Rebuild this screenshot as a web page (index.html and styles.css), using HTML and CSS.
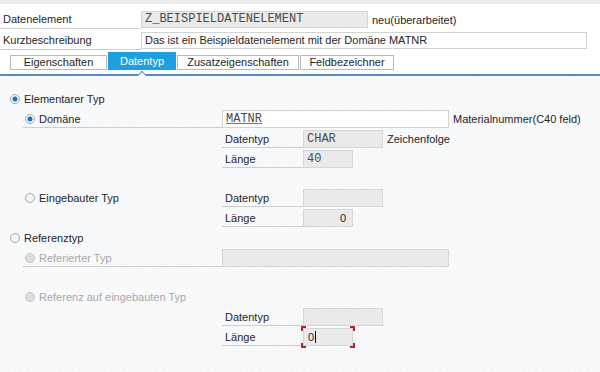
FILE: index.html
```html
<!DOCTYPE html>
<html lang="de">
<head>
    <meta charset="UTF-8">
    <meta name="viewport" content="width=device-width, initial-scale=1.0">
    <title>Datenelement pflegen</title>
    <link rel="stylesheet" href="styles.css">
</head>
<body>
    <div class="top-strip"></div>

    <header class="head">
        <div class="head-row">
            <div class="head-label">Datenelement</div>
            <div class="field field-ro mono w-name">Z_BEISPIELDATENELEMENT</div>
            <span class="note">neu(überarbeitet)</span>
        </div>
        <div class="head-row">
            <div class="head-label">Kurzbeschreibung</div>
            <div class="field w-desc">Das ist ein Beispieldatenelement mit der Domäne MATNR</div>
        </div>
        <!-- Registerkarten -->
        <nav class="tabs">
            <div class="tab w-t1">Eigenschaften</div>
            <div class="tab tab-active w-t2">Datentyp</div>
            <div class="tab w-t3">Zusatzeigenschaften</div>
            <div class="tab w-t4">Feldbezeichner</div>
        </nav>
    </header>
    <div class="tab-line"></div>

    <main class="panel">
        <!-- Elementarer Typ -->
        <div class="row">
            <div class="opt lvl1"><span class="radio on"></span>Elementarer Typ</div>
        </div>
        <div class="row">
            <div class="opt lvl2 lined"><span class="radio on"></span>Domäne</div>
            <div class="field mono w-wide"><span class="link">MATNR</span></div>
            <span class="note">Materialnummer(C40 feld)</span>
        </div>
        <div class="row">
            <div class="opt"></div>
            <div class="lbl">Datentyp</div>
            <div class="field field-ro mono w-type">CHAR</div>
            <span class="note">Zeichenfolge</span>
        </div>
        <div class="row">
            <div class="opt"></div>
            <div class="lbl">Länge</div>
            <div class="field field-ro mono w-len">40</div>
        </div>

        <div class="spacer"></div>

        <!-- Eingebauter Typ -->
        <div class="row">
            <div class="opt lvl2"><span class="radio"></span>Eingebauter Typ</div>
            <div class="lbl">Datentyp</div>
            <div class="field field-ro w-type"></div>
        </div>
        <div class="row">
            <div class="opt"></div>
            <div class="lbl">Länge</div>
            <div class="field field-ro w-len num">0</div>
        </div>

        <!-- Referenztyp -->
        <div class="row">
            <div class="opt lvl1"><span class="radio"></span>Referenztyp</div>
        </div>
        <div class="row">
            <div class="opt lvl2 lined off"><span class="radio"></span>Referierter Typ</div>
            <div class="field field-ro w-wide"></div>
        </div>

        <div class="spacer"></div>

        <div class="row">
            <div class="opt lvl2 off"><span class="radio"></span>Referenz auf eingebauten Typ</div>
        </div>
        <div class="row">
            <div class="opt"></div>
            <div class="lbl">Datentyp</div>
            <div class="field field-ro w-type"></div>
        </div>
        <div class="row">
            <div class="opt"></div>
            <div class="lbl">Länge</div>
            <div class="field field-ro w-len focus">0<span class="caret"></span></div>
        </div>
    </main>
</body>
</html>
```

FILE: styles.css
```css
/* Datentyp-Reiter, SAP GUI Optik */
body {
    margin: 0;
    padding: 0;
    font-family: "Liberation Sans", Arial, sans-serif;
    font-size: 11px;
    color: #262626;
    background: #f7f9fa;
    height: 372px;
    overflow: hidden;
}

.top-strip {
    height: 4px;
    background: #ececec;
}

.head {
    background: #fff;
    padding-top: 7px;
    height: 63px;
}

.head-row {
    display: flex;
    align-items: center;
    height: 17px;
    margin-bottom: 4px;
}

.head-label {
    width: 138px;
    height: 17px;
    line-height: 17px;
    padding-left: 3px;
    border-bottom: 1px solid #cfcfcf;
}

/* Eingabefelder */
.field {
    box-sizing: border-box;
    height: 18px;
    line-height: 16px;
    padding: 0 3px;
    border: 1px solid #d2d2d2;
    background: #fff;
    color: #262626;
    white-space: nowrap;
    overflow: visible;
}

.head-row .field {
    height: 17px;
    line-height: 15px;
}

.field-ro {
    background: #eaeaea;
    border-color: #d6d6d6;
}

.mono {
    font-family: "Liberation Mono", "Courier New", monospace;
    font-size: 12px;
    color: #4a4a4a;
}

.num {
    text-align: right;
    padding-right: 6px;
}

.link {
    text-decoration: underline;
    text-decoration-color: #777;
}

.w-name { width: 227px; }
.w-desc { width: 446px; }
.w-wide { width: 227px; }
.w-type { width: 80px; }
.w-len  { width: 50px; }

.note {
    margin-left: 4px;
    white-space: nowrap;
}

/* Reiter */
.tabs {
    display: flex;
    align-items: flex-end;
    gap: 1px;
    height: 18px;
    margin-top: -1px;
    padding-left: 10px;
}

.tab {
    box-sizing: border-box;
    height: 15px;
    line-height: 13px;
    border: 1px solid #b9b9b9;
    background: #fff;
    text-align: center;
}

.tab-active {
    position: relative;
    height: 18px;
    line-height: 18px;
    border: none;
    background: #1e9fe0;
    color: #fff;
}

.tab-active::after {
    content: "";
    position: absolute;
    z-index: 2;
    left: calc(50% - 3px);
    top: calc(100% + 2px);
    width: 5px;
    height: 5px;
    background: #fff;
    border-top: 1.5px solid #5a8cc4;
    border-left: 1.5px solid #5a8cc4;
    transform: rotate(45deg);
}

.w-t1 { width: 97px; }
.w-t2 { width: 68px; }
.w-t3 { width: 122px; }
.w-t4 { width: 94px; }

.tab-line {
    position: relative;
    height: 2px;
    background: #5a8cc4;
}

/* Inhalt */
.panel {
    padding-top: 14px;
    background: repeating-linear-gradient(135deg, #f9fafb 0 2px, #f5f7f9 2px 4px);
    height: 282px;
}

.row {
    display: flex;
    align-items: center;
    height: 18px;
    margin-bottom: 2px;
}

.spacer {
    height: 19px;
}

.opt {
    box-sizing: border-box;
    display: flex;
    align-items: center;
    width: 222px;
    height: 18px;
    white-space: nowrap;
}

.lvl1 { padding-left: 10px; }

.lvl2 {
    margin-left: 23px;
    width: 199px;
    padding-left: 2px;
}

.lined {
    border-bottom: 1px solid #cdcdcd;
}

.off { color: #a8a8a8; }

.radio {
    box-sizing: border-box;
    width: 10px;
    height: 10px;
    margin-right: 4px;
    border-radius: 50%;
    border: 1px solid #a9a9a9;
    background: #f4f4f4;
}

.radio.on {
    background: radial-gradient(circle, #1673c5 0 2.2px, #f4f4f4 2.8px);
}

.off .radio {
    background: #dedede;
    border-color: #c4c4c4;
}

.lbl {
    box-sizing: border-box;
    width: 81px;
    height: 18px;
    line-height: 18px;
    padding-left: 3px;
    border-bottom: 1px solid #cdcdcd;
}

/* Fokus-Ecken am aktiven Feld */
.focus {
    position: relative;
    padding-left: 4px;
}

.focus::before {
    content: "";
    position: absolute;
    top: -3px;
    left: -3px;
    right: -3px;
    bottom: -3px;
    background:
        linear-gradient(#b3262b, #b3262b) left top / 5px 2px no-repeat,
        linear-gradient(#b3262b, #b3262b) left top / 2px 5px no-repeat,
        linear-gradient(#b3262b, #b3262b) right top / 5px 2px no-repeat,
        linear-gradient(#b3262b, #b3262b) right top / 2px 5px no-repeat,
        linear-gradient(#b3262b, #b3262b) left bottom / 5px 2px no-repeat,
        linear-gradient(#b3262b, #b3262b) left bottom / 2px 5px no-repeat,
        linear-gradient(#b3262b, #b3262b) right bottom / 5px 2px no-repeat,
        linear-gradient(#b3262b, #b3262b) right bottom / 2px 5px no-repeat;
}

.caret {
    display: inline-block;
    width: 1px;
    height: 12px;
    margin-left: 1px;
    vertical-align: -2px;
    background: #000;
}
```
